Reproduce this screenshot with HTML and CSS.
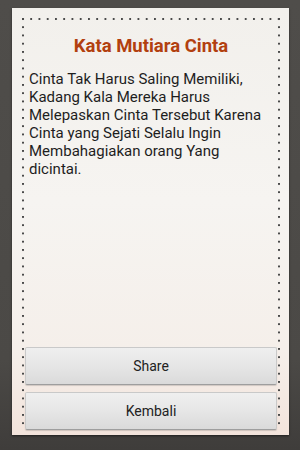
FILE: index.html
```html
<!DOCTYPE html>
<html>
<head>
<meta charset="utf-8">
<link rel="stylesheet" href="styles.css">
</head>
<body>
<div class="paper">
  <div class="frame">
    <h1 class="title">Kata Mutiara Cinta</h1>
    <p class="quote">Cinta Tak Harus Saling Memiliki, Kadang Kala Mereka Harus Melepaskan Cinta Tersebut Karena Cinta yang Sejati Selalu Ingin Membahagiakan orang Yang dicintai.</p>
    <div class="actions">
      <button class="btn">Share</button>
      <button class="btn">Kembali</button>
    </div>
  </div>
</div>
</body>
</html>
```
FILE: styles.css
```css
html, body {
  margin: 0;
  padding: 0;
}
body {
  width: 300px;
  height: 450px;
  padding-top: 8px;
  box-sizing: border-box;
  background: linear-gradient(180deg, #4f4d4a 0%, #4b4946 80%, #3f3d3b 100%);
  font-family: Roboto, "Noto Sans", sans-serif;
  overflow: hidden;
}
.paper {
  margin: 0 11px 0 12px;
  width: 277px;
  height: 427px;
  box-sizing: border-box;
  padding: 10px 9px 7px 10px;
  background: linear-gradient(180deg, #f2f0ec 0%, #f6f4f1 45%, #f5efea 80%, #f3e4dc 100%);
  box-shadow: 0 1px 2px rgba(0,0,0,0.5);
  display: flex;
  flex-direction: column;
}
.frame {
  flex: 1;
  display: flex;
  flex-direction: column;
  padding: 0 3px;
  background:
    radial-gradient(circle at 1px 1px, #4a4a4a 0.9px, rgba(74,74,74,0) 1.4px) left 0 top 0 / 8.25px 2px repeat-x,
    radial-gradient(circle at 1px 1px, #4a4a4a 0.9px, rgba(74,74,74,0) 1.4px) left 0 top 0 / 2px 8.25px repeat-y,
    radial-gradient(circle at 1px 1px, #4a4a4a 0.9px, rgba(74,74,74,0) 1.4px) right 0 top 0 / 2px 8.25px repeat-y;
}
.title {
  margin: 17px 0 0;
  font-size: 18.5px;
  line-height: 22px;
  font-weight: 700;
  color: #b2400f;
  text-align: center;
}
.quote {
  margin: 13px 0 0;
  padding: 0 4px;
  font-size: 15px;
  line-height: normal;
  color: #1e1e1e;
}
.actions {
  margin-top: auto;
  margin-bottom: -2px;
  display: flex;
  flex-direction: column;
  gap: 7px;
}
.btn {
  height: 38px;
  border: 1px solid #c9c9c9;
  border-bottom-color: #9e9e9e;
  border-radius: 2px;
  background: linear-gradient(180deg, #efefef 0%, #e6e6e6 50%, #dadada 100%);
  box-shadow: 0 1px 1px rgba(0,0,0,0.15);
  font-family: Roboto, "Noto Sans", sans-serif;
  font-size: 14px;
  color: #222;
  padding: 0;
}
```
